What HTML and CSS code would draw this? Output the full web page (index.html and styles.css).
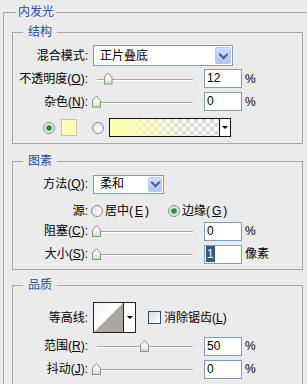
FILE: index.html
```html
<!DOCTYPE html>
<html lang="zh">
<head>
    <meta charset="UTF-8">
    <meta name="viewport" content="width=device-width, initial-scale=1.0">
    <title>内发光</title>
    <link rel="stylesheet" href="styles.css">
</head>
<body>
    <div class="group outer">
        <span class="title">内发光</span>

        <div class="group section s-structure">
            <span class="title">结构</span>
            <div class="row">
                <span class="lbl">混合模式:</span>
                <div class="select wide"><span>正片叠底</span><i class="drop"><b class="chev"></b></i></div>
            </div>
            <div class="row">
                <span class="lbl">不透明度(<u>O</u>):</span>
                <div class="slider"><span class="thumb" style="left: 12%"></span></div>
                <span class="field">12</span><span class="unit">%</span>
            </div>
            <div class="row">
                <span class="lbl">杂色(<u>N</u>):</span>
                <div class="slider"><span class="thumb" style="left: 0%"></span></div>
                <span class="field">0</span><span class="unit">%</span>
            </div>
            <div class="row colors">
                <span class="radio on first"></span>
                <span class="swatch"></span>
                <span class="radio second"></span>
                <div class="gradient"><span class="ramp"></span><span class="arrow"><b class="tri"></b></span></div>
            </div>
        </div>

        <div class="group section s-elements">
            <span class="title">图素</span>
            <div class="row">
                <span class="lbl">方法(<u>Q</u>):</span>
                <div class="select narrow"><span>柔和</span><i class="drop"><b class="chev"></b></i></div>
            </div>
            <div class="row source">
                <span class="lbl">源:</span>
                <span class="opt first"><span class="radio"></span>居中(<u>E</u>)</span>
                <span class="opt"><span class="radio on"></span>边缘(<u>G</u>)</span>
            </div>
            <div class="row">
                <span class="lbl">阻塞(<u>C</u>):</span>
                <div class="slider"><span class="thumb" style="left: 0%"></span></div>
                <span class="field">0</span><span class="unit">%</span>
            </div>
            <div class="row size">
                <span class="lbl">大小(<u>S</u>):</span>
                <div class="slider"><span class="thumb" style="left: 0%"></span></div>
                <span class="field"><span class="picked">1</span></span><span class="unit">像素</span>
            </div>
        </div>

        <div class="group section s-quality">
            <span class="title">品质</span>
            <div class="row contour-row">
                <span class="lbl">等高线:</span>
                <div class="contour">
                    <svg class="curve" width="29" height="29" viewBox="0 0 29 29">
                        <polygon points="0,29 29,0 29,29" fill="#aaa79d"/>
                    </svg>
                    <span class="arrow"><b class="tri"></b></span>
                </div>
                <span class="check"></span>
                <span class="check-text">消除锯齿(<u>L</u>)</span>
            </div>
            <div class="row">
                <span class="lbl">范围(<u>R</u>):</span>
                <div class="slider"><span class="thumb" style="left: 50%"></span></div>
                <span class="field">50</span><span class="unit">%</span>
            </div>
            <div class="row">
                <span class="lbl">抖动(<u>J</u>):</span>
                <div class="slider"><span class="thumb" style="left: 0%"></span></div>
                <span class="field">0</span><span class="unit">%</span>
            </div>
        </div>
    </div>
</body>
</html>
```

FILE: styles.css
```css
body {
    margin: 0;
    height: 384px;
    overflow: hidden;
    background: #ebebeb;
    color: #000;
    font: 12px/14px "Liberation Sans", "Noto Sans CJK SC", sans-serif;
}
u {
    text-decoration: underline;
}
.group {
    position: relative;
    border: 1px solid #a7a7a7;
}
.group > .title {
    position: absolute;
    top: -8px;
    left: 10px;
    padding: 0 5px;
    background: #ebebeb;
    color: #1f4f9e;
}
/* the outer box runs off the right and bottom of the window */
.outer {
    width: 304px;
    margin: 12px 0 0 3px;
    padding: 19px 0 0 8px;
    box-sizing: border-box;
    border-right: 0;
    border-bottom: 0;
}
.outer > .title {
    left: 12px;
    padding: 0 2px;
}
.section {
    width: 291px;
    box-sizing: border-box;
}
.s-structure {
    padding: 11px 0 4px;
}
.s-elements {
    margin-top: 17px;
    padding: 12px 0 5px;
}
.s-quality {
    margin-top: 15px;
    padding: 16px 0 5px;
    border-bottom: 0;
}

.row {
    display: flex;
    align-items: center;
    height: 20px;
}
.s-structure .row {
    height: 23px;
}
.s-structure .colors {
    margin-top: 3px;
}
.source {
    margin-top: 7px;
}
.size {
    margin-top: 3px;
}
.contour-row {
    height: 31px !important;
}
.s-quality .row + .row {
    margin-top: 3px;
}
.lbl {
    flex: none;
    width: 75px;
    text-align: right;
}

/* dropdowns */
.select {
    flex: none;
    display: flex;
    align-items: center;
    justify-content: space-between;
    margin-left: 5px;
    padding: 0 1px 0 6px;
    box-sizing: border-box;
    border: 1px solid #7f9db9;
    background: #fff;
}
.select.wide {
    width: 140px;
    height: 21px;
}
.select.narrow {
    width: 71px;
    height: 19px;
}
.drop {
    display: flex;
    align-items: center;
    justify-content: center;
    width: 16px;
    height: 17px;
    box-sizing: border-box;
    border: 1px solid #b6c9f3;
    border-radius: 2px;
    background: linear-gradient(#d3dffb, #afc4f3);
}
.narrow .drop {
    width: 14px;
    height: 15px;
}
.chev {
    width: 5px;
    height: 5px;
    margin-top: -3px;
    border-right: 2px solid #4b5f88;
    border-bottom: 2px solid #4b5f88;
    transform: rotate(45deg);
}

/* sliders */
.slider {
    flex: none;
    position: relative;
    width: 96px;
    height: 12px;
    margin-left: 9px;
}
.slider::before {
    content: "";
    position: absolute;
    left: 0;
    right: 0;
    top: 6px;
    border-top: 1px solid #a3a3a3;
    border-bottom: 1px solid #fff;
}
.thumb {
    position: absolute;
    top: 0;
    width: 9px;
    height: 12px;
    margin-left: -5px;
    background: #7f9c7d;
    clip-path: polygon(50% 0, 100% 42%, 100% 100%, 0 100%, 0 42%);
}
.thumb::after {
    content: "";
    position: absolute;
    inset: 1px;
    background: linear-gradient(#fff 35%, #c3e4bb);
    clip-path: polygon(50% 0, 100% 42%, 100% 100%, 0 100%, 0 42%);
}
.field {
    flex: none;
    width: 38px;
    height: 19px;
    margin-left: 11px;
    padding-left: 2px;
    box-sizing: border-box;
    border: 1px solid #7f9db9;
    background: #fff;
    line-height: 17px;
}
.picked {
    display: inline-block;
    margin-left: -1px;
    padding: 0 1px;
    background: #34578a;
    color: #fff;
    line-height: 16px;
}
.unit {
    margin-left: 3px;
}

/* radios and colours */
.radio {
    flex: none;
    width: 12px;
    height: 12px;
    box-sizing: border-box;
    border: 1px solid #7f8fa6;
    border-radius: 50%;
    background: radial-gradient(circle at 65% 65%, #fff, #dcddd6);
}
.radio.on {
    background: radial-gradient(circle, #2f8a37 0 2px, #9fcf9a 3px, #eef0ea 4px, #dcddd6);
}
.colors .first {
    margin-left: 30px;
}
.swatch {
    flex: none;
    width: 16px;
    height: 17px;
    margin-left: 6px;
    box-sizing: border-box;
    border: 1px solid #c4c4b4;
    background: #ffffb3;
}
.colors .second {
    margin-left: 15px;
}
.gradient {
    flex: none;
    display: flex;
    width: 122px;
    height: 19px;
    margin-left: 5px;
    box-sizing: border-box;
    border: 1px solid #111;
}
.ramp {
    flex: 1;
    background:
        linear-gradient(90deg, #ffffb0 12%, rgba(255, 255, 176, 0) 78%),
        conic-gradient(#d6d6d6 25%, #fff 0 50%, #d6d6d6 0 75%, #fff 0) 0 0 / 8px 8px;
}
.arrow {
    display: flex;
    align-items: center;
    justify-content: center;
    width: 10px;
    border-left: 1px solid #111;
    background: #fff;
}
.tri {
    width: 0;
    height: 0;
    border-left: 3px solid transparent;
    border-right: 3px solid transparent;
    border-top: 3px solid #000;
}

.opt {
    display: flex;
    align-items: center;
    gap: 2px;
}
.opt.first {
    width: 77px;
    margin-left: 3px;
}

/* quality */
.contour {
    flex: none;
    display: flex;
    width: 43px;
    height: 31px;
    margin-left: 5px;
    box-sizing: border-box;
    border: 1px solid #222;
    background: linear-gradient(135deg, #f2f2f2, #fff 40%);
}
.contour .arrow {
    width: 11px;
    border-left-color: #222;
}
.check {
    flex: none;
    width: 13px;
    height: 13px;
    margin-left: 12px;
    box-sizing: border-box;
    border: 1px solid #1c5180;
    background: linear-gradient(135deg, #dcdcd7, #fff);
}
.check-text {
    margin-left: 3px;
}
```
